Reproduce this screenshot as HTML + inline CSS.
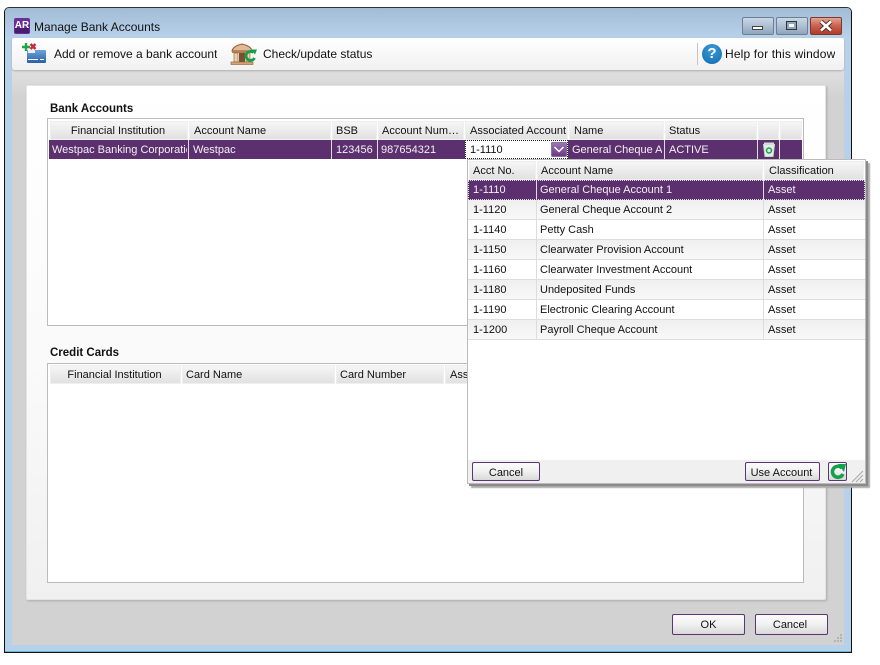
<!DOCTYPE html>
<html><head><meta charset="utf-8">
<style>
html,body{margin:0;padding:0;background:#fff}
body{width:880px;height:665px;position:relative;overflow:hidden;font-family:"Liberation Sans",sans-serif;font-size:11px;color:#111}
div{position:absolute;box-sizing:border-box;white-space:nowrap;overflow:hidden}
.h{background:linear-gradient(#f7f7f7,#e0e0e0);height:19px;line-height:20px;padding-left:5px;box-shadow:inset 0 0 0 1px #efefef}
.c{text-align:center;padding-left:0;padding-right:2px}
.r{height:20px;line-height:21px;padding-left:5px;border-right:1px solid #ddd;border-bottom:1px solid #ddd}
.s{background:linear-gradient(#efefef,#f8f8f8)}
.btn{border:1px solid #5c3570;border-radius:2px;background:linear-gradient(#fbfbfb,#f2f2f2 45%,#d9d9d9);text-align:center;line-height:21px}
.w{color:#f2f2f2;height:19px;line-height:20px}
</style></head><body>
<!-- window -->
<div style="left:4px;top:7px;width:848px;height:646px;background:#b8d1ea;border:1px solid #111;border-top-color:#333;border-radius:5px 5px 0 0"></div>
<div style="left:5px;top:8px;width:846px;height:30px;background:linear-gradient(#a3bcd6,#b9d2ec);border-radius:4px 4px 0 0"></div>
<div style="left:5px;top:651px;width:846px;height:1px;background:#5fb7dc"></div>
<svg style="position:absolute;left:14px;top:18px" width="16" height="16"><rect x="0" y="0" width="16" height="16" rx="2" fill="#6a2f96"/><rect x="1" y="10" width="14" height="5" fill="#4b1d70"/></svg>
<div style="left:14px;top:18px;width:16px;height:16px;color:#fff;font-weight:bold;font-size:10px;line-height:16px;text-align:center">AR</div>
<div style="left:34px;top:19px;font-size:12px;line-height:17px;color:#111">Manage Bank Accounts</div>
<!-- window buttons -->
<div style="left:742px;top:17px;width:32px;height:18px;border:1px solid #6f7f92;border-radius:2px;background:linear-gradient(#c9d8e8,#aebfd2 50%,#8ea5bd)"></div>
<div style="left:752px;top:26px;width:11px;height:4px;border:1px solid #444;background:#fff"></div>
<div style="left:776px;top:17px;width:32px;height:18px;border:1px solid #6f7f92;border-radius:2px;background:linear-gradient(#c9d8e8,#aebfd2 50%,#8ea5bd)"></div>
<div style="left:786px;top:21px;width:11px;height:9px;border:1px solid #333;background:#fff;box-shadow:inset 0 0 0 2px #8fa6be"></div>
<div style="left:810px;top:17px;width:32px;height:18px;border:1px solid #7a3a30;border-radius:2px;background:linear-gradient(#e5a394,#c9604c 50%,#b23a26)"></div>
<svg style="position:absolute;left:810px;top:17px" width="32" height="18"><path d="M11 4.500L21 13.500M21 4.500L11 13.500" stroke="#3b2a28" stroke-width="4.400"/><path d="M11 4.500L21 13.500M21 4.500L11 13.500" stroke="#fff" stroke-width="2.600"/></svg>
<!-- body -->
<div style="left:12px;top:38px;width:832px;height:607px;background:linear-gradient(#efefef,#d2d2d2 60px,#d2d2d2)"></div>
<div style="left:12px;top:38px;width:832px;height:32px;background:linear-gradient(#fff,#f1f1f1);border-radius:3px;box-shadow:0 1px 2px #aaa"></div>
<!-- toolbar icons -->
<svg style="position:absolute;left:20px;top:42px" width="28" height="24">
<defs><linearGradient id="b" x1="0" y1="0" x2="0" y2="1"><stop offset="0" stop-color="#6ea3dc"/><stop offset="1" stop-color="#2a5fa5"/></linearGradient></defs>
<rect x="7" y="8" width="19" height="13" rx="1" fill="url(#b)"/><rect x="8" y="8" width="7" height="3" fill="#e8f1fa"/>
<rect x="8" y="17" width="10" height="1" fill="#fff"/><rect x="20" y="17" width="4" height="1" fill="#fff"/>
<path d="M2 5H10M6 1V9" stroke="#1fa548" stroke-width="2.400"/>
<path d="M10.500 2L15.500 7M15.500 2L10.500 7" stroke="#c8283a" stroke-width="2.400"/></svg>
<div style="left:54px;top:45px;font-size:12px;line-height:18px">Add or remove a bank account</div>
<svg style="position:absolute;left:229px;top:42px" width="30" height="24">
<path d="M3 9Q4 4 13 2Q22 4 23 9Z" fill="#e2b994" stroke="#8a5a34"/><rect x="3" y="9" width="20" height="2" fill="#b67e52"/>
<rect x="5" y="11" width="4" height="9" fill="#ecd0b0" stroke="#8a5a34" stroke-width=".6"/><rect x="10" y="11" width="6" height="9" fill="#7a5130"/><rect x="17" y="11" width="4" height="9" fill="#ecd0b0" stroke="#8a5a34" stroke-width=".6"/>
<rect x="2" y="20" width="22" height="2.500" fill="#d2a478" stroke="#8a5a34" stroke-width=".6"/>
<path d="M24.500 10.500A4.500 4.500 0 1 0 25.500 16" fill="none" stroke="#14a04a" stroke-width="2.800"/><path d="M22 7.500L28 7.500L26 12.500Z" fill="#14a04a"/></svg>
<div style="left:263px;top:45px;font-size:12px;line-height:18px">Check/update status</div>
<div style="left:697px;top:43px;width:1px;height:22px;background:#c4c4c4"></div>
<div style="left:702px;top:44px;width:20px;height:20px;border-radius:50%;background:radial-gradient(circle at 50% 30%,#3d9ad6,#0f6cb0);color:#fff;font-weight:bold;font-size:15px;line-height:20px;text-align:center">?</div>
<div style="left:725px;top:45px;font-size:12px;letter-spacing:.15px;line-height:18px">Help for this window</div>
<!-- panel -->
<div style="left:26px;top:85px;width:800px;height:515px;background:linear-gradient(#fff 0,#f9f9f9 60%,#f0f0f0);border:1px solid #e4e4e4;border-radius:2px;box-shadow:1px 1px 2px #aaa"></div>
<div style="left:50px;top:101px;font-weight:bold;font-size:11.500px;line-height:16px">Bank Accounts</div>
<div style="left:50px;top:345px;font-weight:bold;font-size:11.500px;line-height:16px">Credit Cards</div>
<!-- table 1 -->
<div style="left:47px;top:118px;width:757px;height:208px;background:#fff;border:1px solid #bbb"></div>
<div class="h c" style="left:50px;top:121px;width:138px">Financial Institution</div>
<div class="h" style="left:189px;top:121px;width:142px">Account Name</div>
<div class="h" style="left:332px;top:121px;width:45px;padding-left:4px">BSB</div>
<div class="h" style="left:378px;top:121px;width:86px;padding-left:4px">Account Num…</div>
<div class="h" style="left:465px;top:121px;width:103px">Associated Account</div>
<div class="h" style="left:569px;top:121px;width:95px">Name</div>
<div class="h" style="left:665px;top:121px;width:92px;padding-left:4px">Status</div>
<div class="h" style="left:758px;top:121px;width:21px"></div>
<div class="h" style="left:780px;top:121px;width:22px"></div>
<div style="left:49px;top:140px;width:753px;height:19px;background:#5c2f6e"></div>
<div class="w" style="left:52px;top:140px;width:135px">Westpac Banking Corporation</div>
<div class="w" style="left:193px;top:140px">Westpac</div>
<div class="w" style="left:336px;top:140px">123456</div>
<div class="w" style="left:381px;top:140px">987654321</div>
<div class="w" style="left:572px;top:140px;width:90px">General Cheque Account 1</div>
<div class="w" style="left:669px;top:140px">ACTIVE</div>
<div style="left:188px;top:140px;width:1px;height:19px;background:#ddd"></div>
<div style="left:331px;top:140px;width:1px;height:19px;background:#ddd"></div>
<div style="left:377px;top:140px;width:1px;height:19px;background:#ddd"></div>
<div style="left:664px;top:140px;width:1px;height:19px;background:#ddd"></div>
<div style="left:757px;top:140px;width:1px;height:19px;background:#ddd"></div>
<div style="left:779px;top:140px;width:1px;height:19px;background:#ddd"></div>
<svg style="position:absolute;left:763px;top:142px" width="12" height="15"><path d="M0.500 2.500H11.500L10 14.500H2Z" fill="#e3efe6" stroke="#c9d8cc"/><rect x="1" y="0.500" width="10" height="2" fill="#cfe0d4"/><circle cx="6" cy="8.500" r="2.500" fill="none" stroke="#1aa04c" stroke-width="1.500"/></svg>
<div style="left:465px;top:140px;width:103px;height:19px;background:#fff;border:1px dotted #222;line-height:19px;padding-left:4px">1-1110</div>
<svg style="position:absolute;left:551px;top:142px" width="16" height="15"><defs><linearGradient id="g" x1="0" y1="0" x2="0" y2="1"><stop offset="0" stop-color="#9b78b2"/><stop offset="1" stop-color="#6a3688"/></linearGradient></defs><rect x=".5" y=".5" width="15" height="14" rx="1" fill="url(#g)" stroke="#8a7298"/><path d="M3.500 5L8 9.500L12.500 5" fill="none" stroke="#fff" stroke-width="1.500"/></svg>
<!-- table 2 -->
<div style="left:47px;top:363px;width:757px;height:220px;background:#fff;border:1px solid #bbb"></div>
<div class="h c" style="left:50px;top:365px;width:131px">Financial Institution</div>
<div class="h" style="left:182px;top:365px;width:153px;padding-left:4px">Card Name</div>
<div class="h" style="left:336px;top:365px;width:108px;padding-left:4px">Card Number</div>
<div class="h" style="left:445px;top:365px;width:60px">Ass</div>
<!-- popup -->
<div style="left:467px;top:159px;width:399px;height:325px;background:#fff;border:1px solid #bbb;box-shadow:2px 2px 0 #8a8a8a,4px 4px 1px #aaa"></div>
<div class="h" style="left:469px;top:161px;width:67px;padding-left:4px">Acct No.</div>
<div class="h" style="left:537px;top:161px;width:226px;padding-left:4px">Account Name</div>
<div class="h" style="left:764px;top:161px;width:100px;padding-left:5px">Classification</div>
<div style="left:468px;top:180px;width:397px;height:20px;background:#5c2f6e;border:1px dotted #ddd"></div>
<div class="w" style="left:473px;top:180px;height:20px;line-height:21px">1-1110</div>
<div style="left:536px;top:180px;width:1px;height:20px;background:#ddd"></div>
<div class="w" style="left:540px;top:180px;height:20px;line-height:21px">General Cheque Account 1</div>
<div style="left:763px;top:180px;width:1px;height:20px;background:#ddd"></div>
<div class="w" style="left:768px;top:180px;height:20px;line-height:21px">Asset</div>

<div class="r s" style="left:468px;top:200px;width:69px">1-1120</div><div class="r s" style="left:537px;top:200px;width:227px;padding-left:3px">General Cheque Account 2</div><div class="r s" style="left:764px;top:200px;width:101px;padding-left:4px;border-right:0">Asset</div>
<div class="r" style="left:468px;top:220px;width:69px">1-1140</div><div class="r" style="left:537px;top:220px;width:227px;padding-left:3px">Petty Cash</div><div class="r" style="left:764px;top:220px;width:101px;padding-left:4px;border-right:0">Asset</div>
<div class="r s" style="left:468px;top:240px;width:69px">1-1150</div><div class="r s" style="left:537px;top:240px;width:227px;padding-left:3px">Clearwater Provision Account</div><div class="r s" style="left:764px;top:240px;width:101px;padding-left:4px;border-right:0">Asset</div>
<div class="r" style="left:468px;top:260px;width:69px">1-1160</div><div class="r" style="left:537px;top:260px;width:227px;padding-left:3px">Clearwater Investment Account</div><div class="r" style="left:764px;top:260px;width:101px;padding-left:4px;border-right:0">Asset</div>
<div class="r s" style="left:468px;top:280px;width:69px">1-1180</div><div class="r s" style="left:537px;top:280px;width:227px;padding-left:3px">Undeposited Funds</div><div class="r s" style="left:764px;top:280px;width:101px;padding-left:4px;border-right:0">Asset</div>
<div class="r" style="left:468px;top:300px;width:69px">1-1190</div><div class="r" style="left:537px;top:300px;width:227px;padding-left:3px">Electronic Clearing Account</div><div class="r" style="left:764px;top:300px;width:101px;padding-left:4px;border-right:0">Asset</div>
<div class="r s" style="left:468px;top:320px;width:69px">1-1200</div><div class="r s" style="left:537px;top:320px;width:227px;padding-left:3px">Payroll Cheque Account</div><div class="r s" style="left:764px;top:320px;width:101px;padding-left:4px;border-right:0">Asset</div>

<div style="left:468px;top:460px;width:397px;height:23px;background:#f0f0f0"></div>
<div class="btn" style="left:472px;top:462px;width:68px;height:19px;line-height:20px">Cancel</div>
<div class="btn" style="left:745px;top:462px;width:75px;height:19px;line-height:20px;padding-right:2px">Use Account</div>
<div class="btn" style="left:828px;top:462px;width:19px;height:19px"></div>
<svg style="position:absolute;left:829px;top:463px" width="18" height="17"><path d="M13 5A5.500 5.500 0 1 0 14 11" fill="none" stroke="#17a04c" stroke-width="3.600"/><path d="M9 1H17L15 9Z" fill="#17a04c"/></svg>
<svg style="position:absolute;left:851px;top:470px" width="13" height="13"><path d="M12 1L1 12M12 5L5 12M12 9L9 12" stroke="#a8a8a8" stroke-width="1"/></svg>
<!-- bottom -->
<div class="btn" style="left:672px;top:614px;width:73px;height:21px">OK</div>
<div class="btn" style="left:755px;top:614px;width:73px;height:21px;padding-right:3px">Cancel</div>
<svg style="position:absolute;left:834px;top:634px" width="9" height="9"><g fill="#b4b4b4"><rect x="6" y="0" width="2" height="2"/><rect x="3" y="3" width="2" height="2"/><rect x="6" y="3" width="2" height="2"/><rect x="0" y="6" width="2" height="2"/><rect x="3" y="6" width="2" height="2"/><rect x="6" y="6" width="2" height="2"/></g></svg>
</body></html>
